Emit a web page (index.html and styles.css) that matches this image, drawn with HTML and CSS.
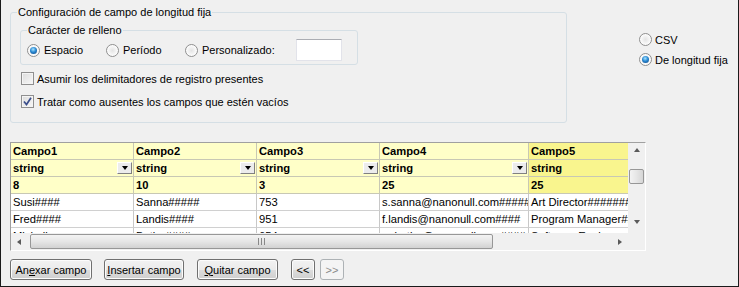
FILE: index.html
```html
<!DOCTYPE html>
<html lang="es">
<head>
<meta charset="utf-8">
<title>Configuración</title>
<link rel="stylesheet" href="styles.css">
</head>
<body>
<div class="window">
  <div class="top">
    <fieldset class="group outer">
      <legend>Configuración de campo de longitud fija</legend>
      <fieldset class="group inner">
        <legend>Carácter de relleno</legend>
        <div class="radio-row">
          <label class="opt w79"><span class="radio on"></span>Espacio</label>
          <label class="opt w79"><span class="radio"></span>Período</label>
          <label class="opt"><span class="radio"></span>Personalizado:</label>
          <span class="textbox"></span>
        </div>
      </fieldset>
      <label class="check-row first"><span class="check"></span>Asumir los delimitadores de registro presentes</label>
      <label class="check-row second"><span class="check on"><svg width="9" height="9" viewBox="0 0 9 9"><path d="M1 4.5 L3.5 7.5 L8 0.8" fill="none" stroke="#3c4f8c" stroke-width="1.7"/></svg></span>Tratar como ausentes los campos que estén vacíos</label>
    </fieldset>
    <div class="format">
      <label class="opt frow"><span class="radio"></span>CSV</label>
      <label class="opt frow"><span class="radio on"></span>De longitud fija</label>
    </div>
  </div>

  <div class="gridbox">
    <div class="table">
      <div class="cell h">Campo1</div><div class="cell h">Campo2</div><div class="cell h">Campo3</div><div class="cell h">Campo4</div><div class="cell h sel">Campo5</div>
      <div class="cell h">string<span class="dd"></span></div><div class="cell h">string<span class="dd"></span></div><div class="cell h">string<span class="dd"></span></div><div class="cell h">string<span class="dd"></span></div><div class="cell h sel">string<span class="dd"></span></div>
      <div class="cell h">8</div><div class="cell h">10</div><div class="cell h">3</div><div class="cell h">25</div><div class="cell h sel">25</div>
      <div class="cell">Susi####</div><div class="cell">Sanna#####</div><div class="cell">753</div><div class="cell">s.sanna@nanonull.com#####</div><div class="cell">Art Director#######</div>
      <div class="cell">Fred####</div><div class="cell">Landis####</div><div class="cell">951</div><div class="cell">f.landis@nanonull.com####</div><div class="cell">Program Manager##</div>
      <div class="cell">Michelle</div><div class="cell">Butler####</div><div class="cell">654</div><div class="cell">m.butler@nanonull.com####</div><div class="cell">Software Engineer</div>
    </div>
    <div class="vbar">
      <span class="arr up"></span>
      <span class="vthumb"></span>
      <span class="arr down"></span>
    </div>
    <div class="hbar">
      <span class="arr left"></span>
      <span class="hthumb"><span class="grip"></span></span>
      <span class="arr right"></span>
    </div>
    <div class="corner"></div>
  </div>

  <div class="buttons">
    <button class="btn b82">An<u>e</u>xar campo</button>
    <button class="btn b80"><u>I</u>nsertar campo</button>
    <button class="btn b81"><u>Q</u>uitar campo</button>
    <button class="btn small">&lt;&lt;</button>
    <button class="btn small disabled">&gt;&gt;</button>
  </div>
</div>
</body>
</html>
```
FILE: styles.css
```css
html, body { margin: 0; padding: 0; }
body { font-family: "Liberation Sans", Arial, sans-serif; font-size: 11px; color: #000; background: #f0f0f0; }
.window {
  width: 739px; height: 287px; box-sizing: border-box;
  border: 1px solid #1a1a1a; border-top: 0;
  background: #f0f0f0; padding-left: 9px;
}
.top { display: flex; align-items: flex-start; }
.group {
  border: 1px solid #d5dfe5; border-radius: 3px; margin: 0; min-width: 0;
}
.group legend { padding: 0 1px; line-height: 13px; height: 13px; }
.outer {
  width: 557px; box-sizing: border-box; margin-top: 6px;
  padding: 0 0 11px 6px; height: 117px;
}
.inner {
  width: 338px; box-sizing: border-box; margin: 5px 0 0 3px;
  padding: 2px 0 3px 6px;
}
.radio-row { display: flex; align-items: center; height: 22px; }
.opt { display: flex; align-items: center; gap: 4px; white-space: nowrap; }
.w79 { width: 79px; }
.radio {
  width: 13px; height: 13px; box-sizing: border-box; border-radius: 50%;
  border: 1px solid #8f8f8f; flex: none;
  background: radial-gradient(circle at 50% 50%, #e4e4e4 0, #f4f4f4 45%, #fdfdfd 70%);
  display: flex; align-items: center; justify-content: center;
}
.radio.on::after {
  content: ""; width: 7px; height: 7px; border-radius: 50%;
  background: radial-gradient(circle at 45% 35%, #a9e4ff 0, #2a8ad3 45%, #0b3f7e 100%);
}
.textbox {
  width: 46px; height: 22px; box-sizing: border-box; margin-left: 21px;
  background: #fff; border: 1px solid #e2e3ea; border-top-color: #abadb3;
}
.check-row { display: flex; align-items: center; gap: 3px; height: 17px; margin-left: 4px; }
.check-row.first { margin-top: 5px; }
.check-row.second { margin-top: 6px; }
.check {
  width: 13px; height: 13px; box-sizing: border-box; flex: none;
  border: 1px solid #8f8f8f;
  background: linear-gradient(135deg, #dcdcdc, #f8f8f8);
  box-shadow: inset 0 0 0 1px #f4f4f4;
  display: flex; align-items: center; justify-content: center;
}
.check svg { display: block; }
.format { margin: 31px 0 0 72px; display: flex; flex-direction: column; gap: 3px; }
.frow { height: 17px; gap: 3px; }

.gridbox {
  margin-top: 19px; width: 636px; height: 109px; box-sizing: border-box;
  border: 1px solid; border-color: #a0a0a0 #fff #fff #a0a0a0;
  box-shadow: inset 1px 1px 0 #696969;
  display: grid; grid-template-columns: 617px 17px; grid-template-rows: 90px 17px;
  background: #fff;
}
.table {
  overflow: hidden; display: grid;
  grid-template-columns: 123px 123px 123px 149px 150px;
  grid-auto-rows: 17px;
  font-size: 11.2px;
}
.cell {
  box-sizing: border-box; border-right: 1px solid #c8c8c8; border-bottom: 1px solid #d0d0d0;
  padding: 0 1px 0 2px; line-height: 16px; white-space: nowrap; overflow: hidden;
  display: flex; align-items: center; justify-content: space-between;
  background: #fff;
}
.cell.h { background: #ffffc8; font-weight: bold; border-color: #c8c8b4; }
.cell.h.sel { background: #f9f58e; }
.dd {
  width: 15px; height: 12px; box-sizing: border-box; flex: none;
  border: 1px solid; border-color: #fff #808080 #808080 #fff;
  background: #ececec; display: flex; align-items: center; justify-content: center;
}
.dd::after {
  content: ""; border-left: 3.5px solid transparent; border-right: 3.5px solid transparent;
  border-top: 4px solid #000;
}
.vbar, .hbar, .corner { background: #f0f0f0; display: flex; align-items: center; }
.vbar { flex-direction: column; padding: 3px 0; box-sizing: border-box; }
.hbar { padding: 0 3px; box-sizing: border-box; }
.arr { width: 0; height: 0; border: 3px solid transparent; flex: none; }
.arr.up { border-bottom: 4px solid #5a5a5a; border-top: 0; margin-top: 2px; }
.arr.down { border-top: 4px solid #5a5a5a; border-bottom: 0; margin-top: auto; margin-bottom: 6px; }
.arr.left { border-right: 4px solid #5a5a5a; border-left: 0; margin-left: 3px; }
.arr.right { border-left: 4px solid #5a5a5a; border-right: 0; margin-left: auto; margin-right: 3px; }
.vthumb {
  width: 15px; height: 15px; box-sizing: border-box; margin-top: 17px;
  border: 1px solid #979797; border-radius: 2px;
  background: linear-gradient(90deg, #f3f3f3, #e6e6e6 50%, #d6d6d6);
}
.hthumb {
  height: 15px; width: 463px; box-sizing: border-box; margin-left: 9px;
  border: 1px solid #979797; border-radius: 2px;
  background: linear-gradient(#f3f3f3, #e6e6e6 50%, #d2d2d2);
  display: flex; align-items: center; justify-content: center;
}
.grip {
  width: 7px; height: 7px;
  background: repeating-linear-gradient(90deg, #888 0 1px, transparent 1px 3px);
}
.buttons { display: flex; margin-top: 8px; }
.btn {
  font: 11px "Liberation Sans", Arial, sans-serif; color: #000;
  height: 21px; box-sizing: border-box; padding: 0; margin: 0 13px 0 0;
  border: 1px solid #707070; border-radius: 3px;
  background: linear-gradient(#f2f2f2 0, #ebebeb 50%, #dddddd 51%, #cfcfcf 100%);
  box-shadow: inset 0 0 0 1px #fcfcfc;
}
.btn u { text-decoration: underline; }
.b82 { width: 82px; margin-right: 12px; }
.b80 { width: 80px; }
.b81 { width: 81px; }
.btn.small { width: 24px; margin-right: 5px; }
.btn.disabled { color: #8a8a8a; border-color: #adb2b5; background: #f4f4f4; box-shadow: none; }
```
